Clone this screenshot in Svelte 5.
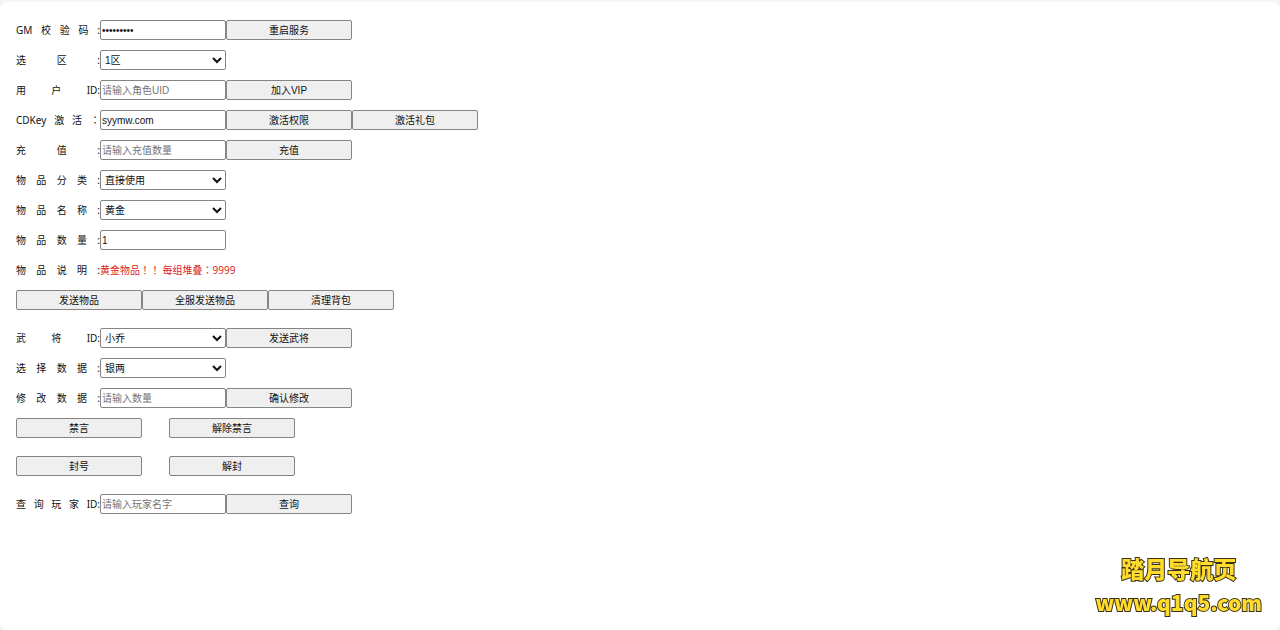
<script lang="ts">
	let code = 'syymw.com';
	let password = 'gmpasswor';
	let uid = '';
	let amount = '';
	let count = '1';
	let newValue = '';
	let playerName = '';
</script>

<!-- spreads the parts of a label over the full label width -->
{#snippet parts(text: string)}
	{#each text.split(' ') as part}
		<span class:wide={part === '：'}>{part}</span>
	{/each}
{/snippet}

<main class="panel">
	<form on:submit|preventDefault>
		<div class="row">
			<label for="gm-code">{@render parts('GM 校 验 码 :')}</label>
			<input id="gm-code" type="password" bind:value={password} />
			<button type="button">重启服务</button>
		</div>
		<div class="row">
			<label for="zone">{@render parts('选 区 :')}</label>
			<select id="zone">
				<option>1区</option>
			</select>
		</div>
		<div class="row">
			<label for="uid">{@render parts('用 户 ID:')}</label>
			<input id="uid" type="text" placeholder="请输入角色UID" bind:value={uid} />
			<button type="button">加入VIP</button>
		</div>
		<div class="row">
			<label for="cdkey">{@render parts('CDKey 激 活 ：')}</label>
			<input id="cdkey" type="text" bind:value={code} />
			<button type="button">激活权限</button>
			<button type="button">激活礼包</button>
		</div>
		<div class="row">
			<label for="amount">{@render parts('充 值 :')}</label>
			<input id="amount" type="text" placeholder="请输入充值数量" bind:value={amount} />
			<button type="button">充值</button>
		</div>
		<div class="row">
			<label for="item-type">{@render parts('物 品 分 类 :')}</label>
			<select id="item-type">
				<option>直接使用</option>
			</select>
		</div>
		<div class="row">
			<label for="item-name">{@render parts('物 品 名 称 :')}</label>
			<select id="item-name">
				<option>黄金</option>
			</select>
		</div>
		<div class="row">
			<label for="item-count">{@render parts('物 品 数 量 :')}</label>
			<input id="item-count" type="text" bind:value={count} />
		</div>
		<div class="row">
			<span class="label">{@render parts('物 品 说 明 :')}</span>
			<span class="note">黄金物品<span class="wide">！！</span> 每组堆叠<span class="wide">：</span>9999</span>
		</div>
		<div class="row group-end">
			<button type="button">发送物品</button>
			<button type="button">全服发送物品</button>
			<button type="button">清理背包</button>
		</div>
		<div class="row">
			<label for="general">{@render parts('武 将 ID:')}</label>
			<select id="general">
				<option>小乔</option>
			</select>
			<button type="button">发送武将</button>
		</div>
		<div class="row">
			<label for="data-type">{@render parts('选 择 数 据 :')}</label>
			<select id="data-type">
				<option>银两</option>
			</select>
		</div>
		<div class="row">
			<label for="data-value">{@render parts('修 改 数 据 :')}</label>
			<input id="data-value" type="text" placeholder="请输入数量" bind:value={newValue} />
			<button type="button">确认修改</button>
		</div>
		<div class="row spaced group-end">
			<button type="button">禁言</button>
			<button type="button">解除禁言</button>
		</div>
		<div class="row spaced group-end">
			<button type="button">封号</button>
			<button type="button">解封</button>
		</div>
		<div class="row">
			<label for="player">{@render parts('查 询 玩 家 ID:')}</label>
			<input id="player" type="text" placeholder="请输入玩家名字" bind:value={playerName} />
			<button type="button">查询</button>
		</div>
	</form>

	<aside class="watermark">
		<span class="site-name">踏月导航页</span>
		<span class="site-url">www.q1q5.com</span>
	</aside>
</main>

<style>
	:global(body) {
		background: #f5f5f5;
	}

	:global(#app) {
		display: flow-root;
	}

	.panel {
		box-sizing: border-box;
		min-height: calc(100vh - 2px);
		margin-top: 2px;
		padding: 13px 16px;
		border-radius: 8px;
		background: #fff;
		color: #111;
		font-family: 'Noto Sans', 'Noto Sans CJK SC', sans-serif;
		font-size: 10px;
	}

	.row {
		display: flex;
		align-items: center;
		height: 30px;
	}

	.spaced {
		gap: 27px;
	}

	.group-end {
		margin-bottom: 8px;
	}

	label,
	.label,
	.note {
		padding-bottom: 2px;
		white-space: nowrap;
	}

	label,
	.label {
		display: flex;
		flex: none;
		justify-content: space-between;
		align-items: baseline;
		width: 84px;
	}

	.wide {
		font-family: 'Noto Sans CJK TC', sans-serif;
	}

	.note {
		color: #d9261c;
	}

	input,
	select,
	button {
		box-sizing: border-box;
		width: 126px;
		height: 20px;
		margin: 0;
		border: 1px solid #858585;
		border-radius: 2px;
		color: #111;
		font-family: 'Liberation Sans', 'Noto Sans CJK SC', sans-serif;
		font-size: 10px;
	}

	input {
		padding: 1px;
		background: #fff;
	}

	input::placeholder {
		color: #757575;
	}

	select {
		padding: 0;
		background: #fff;
	}

	button {
		padding: 0 6px 2px;
		background: #efefef;
	}

	.watermark {
		position: fixed;
		right: 18px;
		bottom: 11px;
		display: flex;
		flex-direction: column;
		align-items: center;
		color: #ffdb2e;
		font-family: 'Noto Sans CJK SC', sans-serif;
		font-weight: 900;
		line-height: 34px;
		-webkit-text-stroke: 2px #3a3213;
		paint-order: stroke fill;
	}

	.site-name {
		font-size: 23px;
	}

	.site-url {
		font-size: 21px;
	}
</style>
